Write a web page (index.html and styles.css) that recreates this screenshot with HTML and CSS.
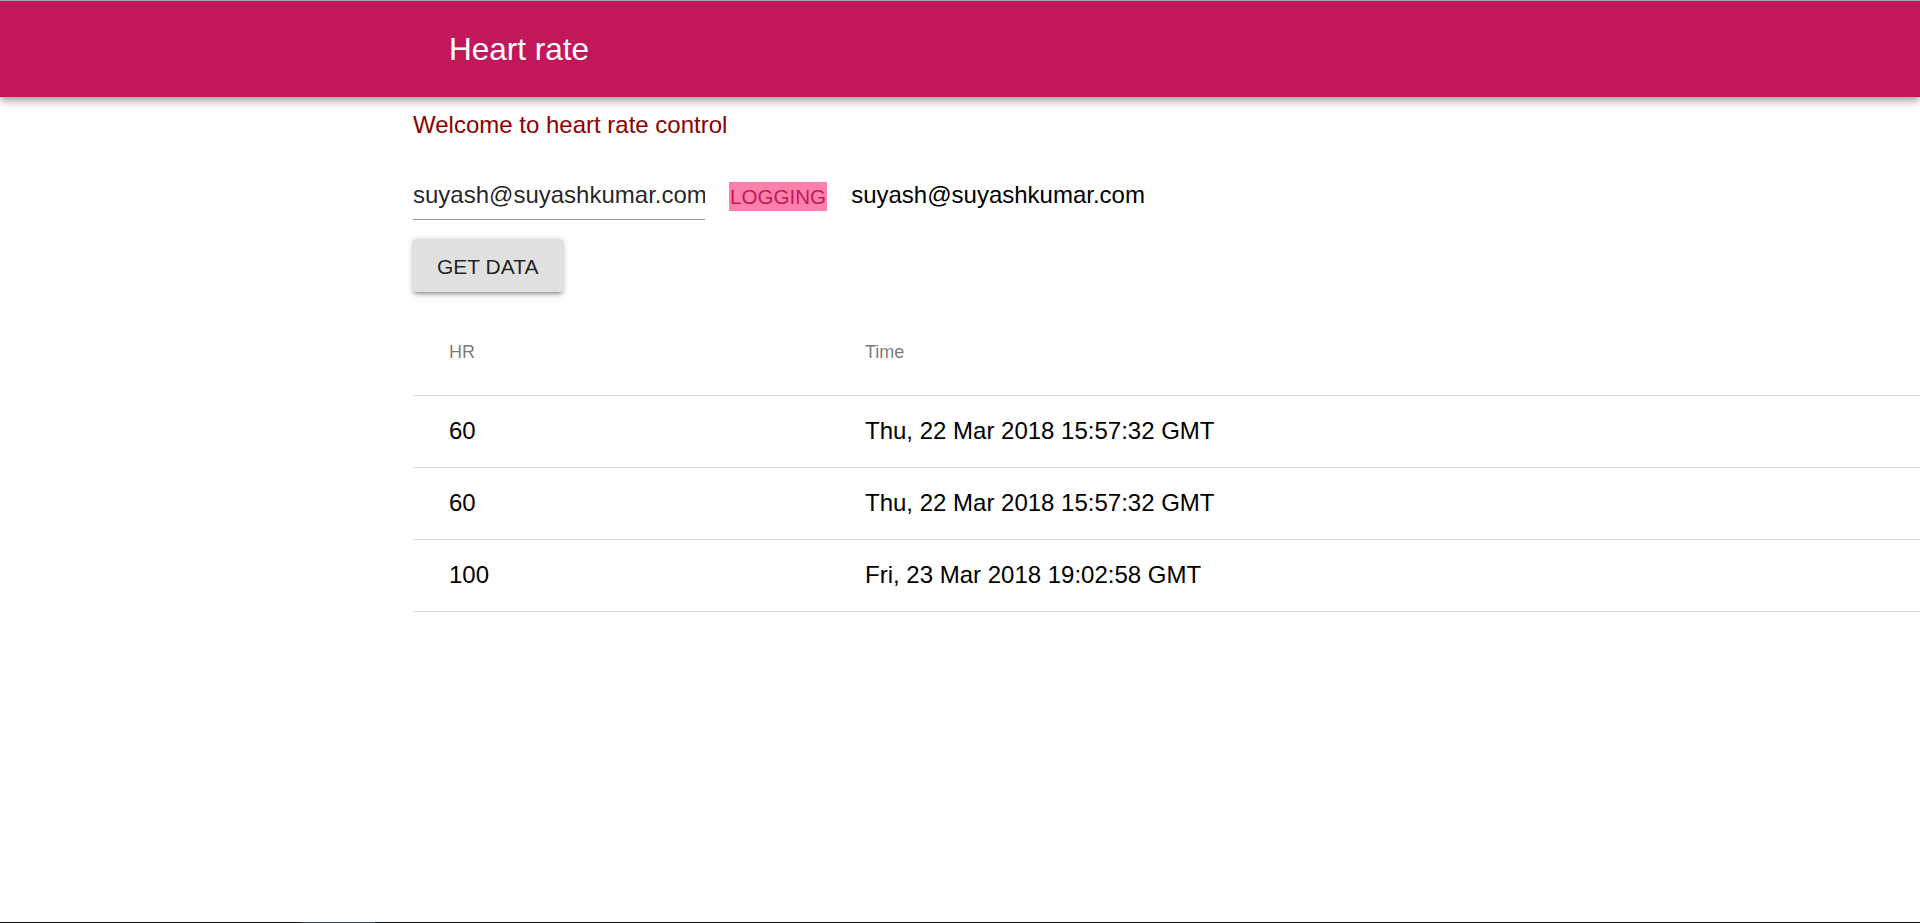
FILE: index.html
```html
<!DOCTYPE html>
<html lang="en">
<head>
<meta charset="utf-8">
<title>Heart rate</title>
<link rel="stylesheet" href="styles.css">
</head>
<body>
<div class="page">
  <header class="appbar">
    <h1 class="appbar-title">Heart rate</h1>
  </header>
  <main class="content">
    <p class="welcome">Welcome to heart rate control</p>
    <div class="login-row">
      <div class="field"><input class="field-input" type="text" value="suyash@suyashkumar.com"></div>
      <span class="chip">LOGGING</span>
      <span class="current-user">suyash@suyashkumar.com</span>
    </div>
    <button class="btn" type="button">GET DATA</button>
    <table class="data-table">
      <thead>
        <tr><th class="col-hr">HR</th><th>Time</th></tr>
      </thead>
      <tbody>
        <tr><td>60</td><td>Thu, 22 Mar 2018 15:57:32 GMT</td></tr>
        <tr><td>60</td><td>Thu, 22 Mar 2018 15:57:32 GMT</td></tr>
        <tr><td>100</td><td>Fri, 23 Mar 2018 19:02:58 GMT</td></tr>
      </tbody>
    </table>
  </main>
  <div class="taskbar"></div>
</div>
</body>
</html>
```

FILE: styles.css
```css
* { box-sizing: border-box; }
html, body { margin: 0; padding: 0; }
body {
  font-family: "Liberation Sans", Arial, sans-serif;
  background: #fff;
  color: #000;
  overflow: hidden;
}
.page {
  height: 100vh;
  display: flex;
  flex-direction: column;
}
.appbar {
  flex: 0 0 auto;
  height: 97px;
  border-top: 1px solid #a7a7a7;
  background: #c2185b;
  display: flex;
  align-items: center;
  padding-left: 449px;
  box-shadow: 0 3px 6px -1px rgba(0,0,0,0.2), 0 6px 7px 0 rgba(0,0,0,0.14), 0 1px 15px 0 rgba(0,0,0,0.12);
  position: relative;
  z-index: 1;
}
.appbar-title {
  margin: 0;
  font-size: 31.5px;
  font-weight: 400;
  color: #fff;
  line-height: 36px;
}
.content {
  flex: 1 1 auto;
  padding-left: 413px;
  padding-top: 14px;
}
.welcome {
  margin: 0;
  font-size: 24px;
  line-height: 28px;
  color: #8b0000;
}
.login-row {
  display: flex;
  align-items: flex-start;
  gap: 24px;
  margin-top: 42px;
}
.field {
  width: 292px;
  border-bottom: 1px solid rgba(0,0,0,0.42);
  padding-bottom: 10px;
}
.field-input {
  display: block;
  width: 100%;
  border: 0;
  outline: none;
  padding: 0;
  margin: 0;
  font-family: inherit;
  font-size: 24px;
  line-height: 28px;
  height: 28px;
  color: rgba(0,0,0,0.87);
  background: transparent;
}
.chip {
  margin-top: 1px;
  background: #ff80ab;
  color: #c2185b;
  font-size: 20.6px;
  line-height: 29px;
  height: 29px;
  padding: 0 1px;
}
.current-user {
  font-size: 24px;
  line-height: 28px;
  color: #000;
}
.btn {
  display: block;
  margin-top: 19px;
  width: 150px;
  height: 53px;
  padding: 3px 24px 0;
  border: 0;
  border-radius: 3px;
  background: #e0e0e0;
  color: rgba(0,0,0,0.87);
  font-family: inherit;
  font-size: 21px;
  text-align: left;
  white-space: nowrap;
  box-shadow: 0 1.5px 7.5px 0 rgba(0,0,0,0.2), 0 3px 3px 0 rgba(0,0,0,0.14), 0 4.5px 1.5px -3px rgba(0,0,0,0.12);
}
.data-table {
  margin-top: 19px;
  width: 1507px;
  table-layout: fixed;
  border-collapse: collapse;
}
.data-table th,
.data-table td {
  padding: 0 36px;
  text-align: left;
  border-bottom: 1px solid #e0e0e0;
  white-space: nowrap;
}
.data-table th {
  height: 84px;
  font-size: 18px;
  font-weight: 400;
  color: rgba(0,0,0,0.54);
}
.data-table th.col-hr { width: 416px; }
.data-table td {
  height: 72px;
  font-size: 24px;
  line-height: 28px;
  color: #000;
}
.taskbar {
  flex: 0 0 1px;
  height: 1px;
  background: linear-gradient(to right, #121a1e 302px, #3c4043 302px, #3c4043 375px, #121a1e 375px);
}
```
